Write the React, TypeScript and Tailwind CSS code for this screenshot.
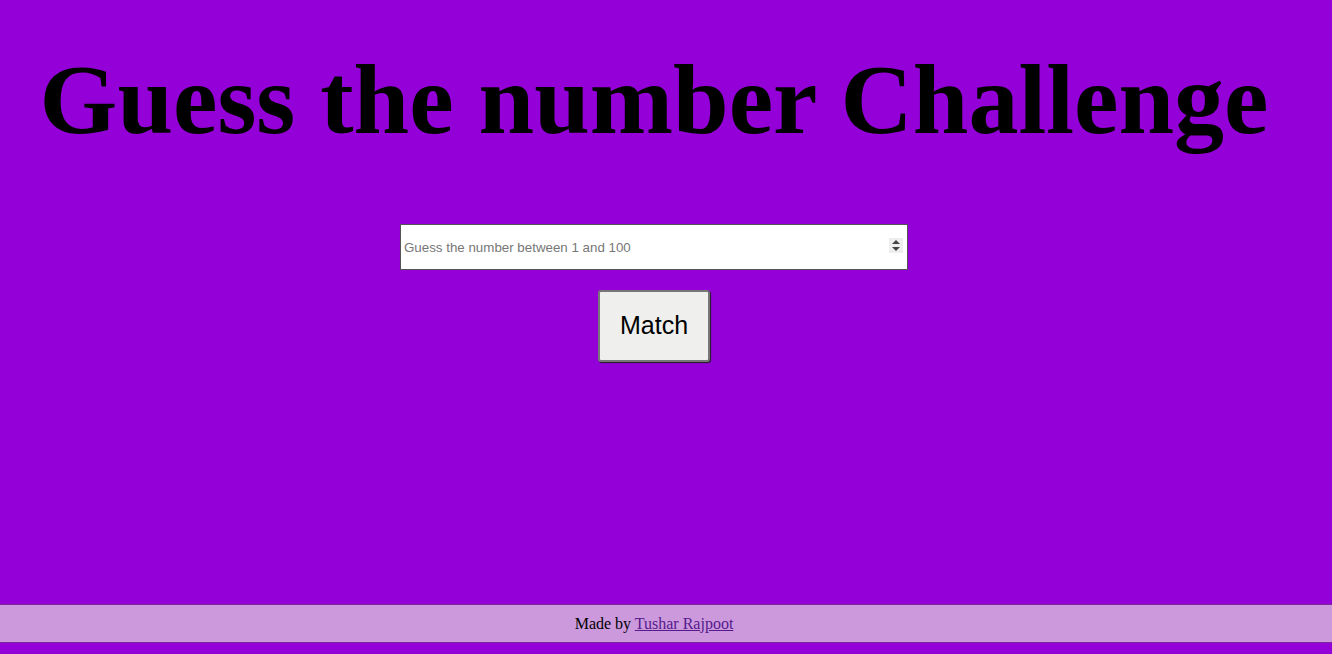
import React from "react";

export default function App() {
  return (
    <div className="min-h-[654px] w-full bg-[#9400d8] flex flex-col">
      <h1 className="text-center pr-[24px] font-bold text-black text-[100px] leading-none pt-[50px] font-['Liberation_Serif',serif]">
        Guess the number Challenge
      </h1>
      <div className="flex flex-col items-center pr-[24px] mt-[74px]">
        <div className="relative w-[508px] h-[46px]">
          <input
            type="text"
            placeholder="Guess the number between 1 and 100"
            className="w-full h-full bg-white border border-[#555] pl-[3px] text-[13.33px] text-black placeholder:text-[#777] outline-none font-['Liberation_Sans',sans-serif]"
          />
          <div className="absolute right-[5px] top-[14px] w-[14px] h-[15px] bg-[#eeeeee] flex items-center justify-center">
            <svg width="8" height="11" viewBox="0 0 8 11">
              <path d="M4 0 L8 4 L0 4 Z" fill="#444" />
              <path d="M0 7 L8 7 L4 11 Z" fill="#444" />
            </svg>
          </div>
        </div>
        <button className="mt-[20px] w-[112px] h-[72px] bg-[#efefed] border-2 border-[#777] rounded-[3px] shadow-[1px_1px_1px_#222] text-[25px] text-black font-['Liberation_Sans',sans-serif]">
          Match
        </button>
      </div>
      <div className="flex-1" />
      <footer className="h-[39px] mb-[11px] bg-[#cc99dd] border-y border-[#7a2a99] flex items-center justify-center pr-[24px] text-[16px] text-black font-['Liberation_Serif',serif]">
        <span>
          Made by <a href="#" className="underline text-[#551a8b]">Tushar Rajpoot</a>
        </span>
      </footer>
    </div>
  );
}
